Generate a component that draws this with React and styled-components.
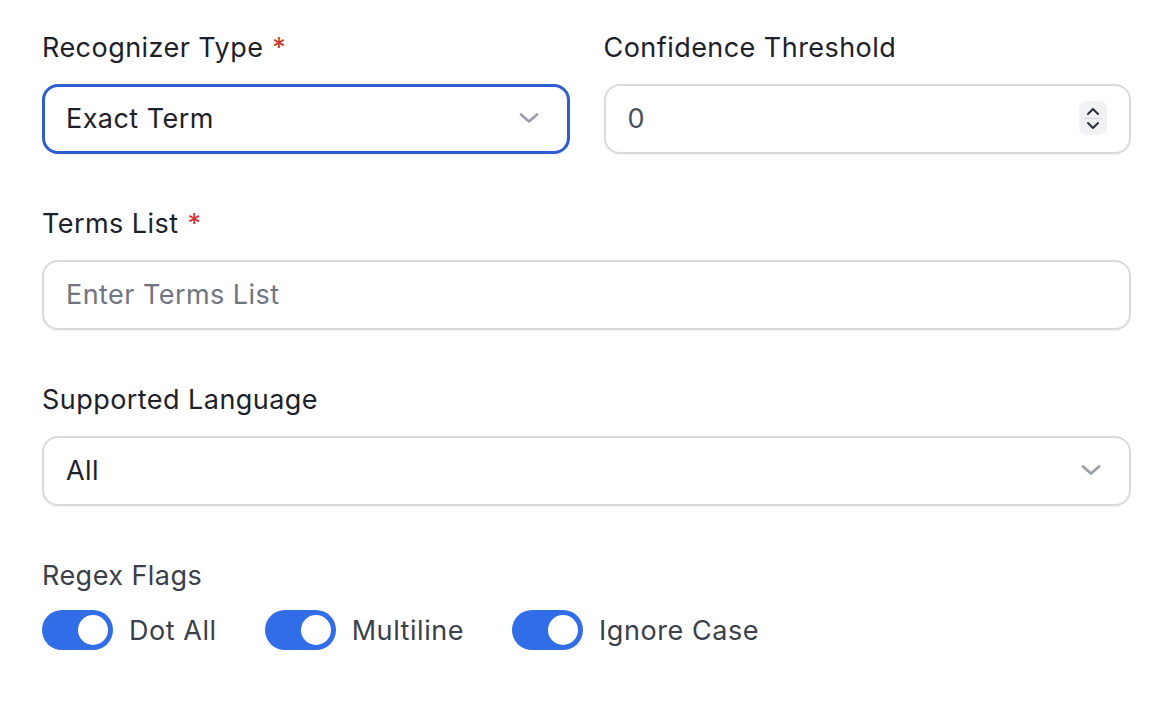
import React, { useState } from 'react'
import styled, { createGlobalStyle } from 'styled-components'

const GlobalStyle = createGlobalStyle`
  body {
    margin: 0;
    background: #ffffff;
    font-family: Inter, "Noto Sans", sans-serif;
    -webkit-font-smoothing: antialiased;
  }
`

const Form = styled.form`
  display: flex;
  flex-direction: column;
  gap: 52px;
  padding: 30px 39px 40px 42px;
`

const Row = styled.div`
  display: grid;
  grid-template-columns: 1fr 1fr;
  column-gap: 34px;
`

const Field = styled.div`
  display: flex;
  flex-direction: column;
`

const Label = styled.label`
  font-size: 27px;
  letter-spacing: 0.45px;
  line-height: 36px;
  color: ${p => (p.$muted ? '#3a3f4a' : '#1d2129')};
  margin-bottom: 18px;
`

const Required = styled.span`
  color: #d0342c;
  margin-left: 9px;
`

const Box = styled.div`
  box-sizing: border-box;
  height: 70px;
  display: flex;
  align-items: center;
  padding: 0 26px 2px 22px;
  border-radius: 16px;
  border: ${p => (p.$focused ? '3px solid #2f5cd0' : '2px solid #d9dade')};
  padding-left: ${p => (p.$focused ? '21px' : '22px')};
  box-shadow: 0 1px 2px rgba(16, 24, 40, 0.06);
  background: #fff;
`

const Value = styled.span`
  flex: 1;
  font-size: 27px;
  letter-spacing: 0.45px;
  color: ${p => (p.$placeholder ? '#6f7580' : p.$soft ? '#4a4f59' : '#1d2129')};
`

const Chevron = styled.svg`
  width: 24px;
  height: 24px;
  flex: none;
`

const Spinner = styled.div`
  width: 28px;
  height: 34px;
  border-radius: 8px;
  background: #f2f2f4;
  display: flex;
  flex-direction: column;
  align-items: center;
  justify-content: center;
  margin-right: -4px;

  svg {
    width: 16px;
    height: 12px;
  }
`

const SpinDivider = styled.div`
  width: 18px;
  height: 1px;
  background: #d6d7db;
  margin: 1px 0;
`

const ToggleRow = styled.div`
  display: flex;
  align-items: center;
  gap: 48px;
  margin-top: -2px;
`

const ToggleItem = styled.label`
  display: flex;
  align-items: center;
  gap: 16px;
  font-size: 27px;
  letter-spacing: 0.55px;
  color: #3a3f4a;
  cursor: pointer;
`

const Track = styled.span`
  position: relative;
  width: 71px;
  height: 40px;
  border-radius: 20px;
  background: ${p => (p.$on ? '#316de6' : '#d1d5db')};
  flex: none;
`

const Knob = styled.span`
  position: absolute;
  top: 5px;
  left: ${p => (p.$on ? '36px' : '5px')};
  width: 30px;
  height: 30px;
  border-radius: 50%;
  background: #fff;
  transition: left 0.15s ease;
`

const ChevronDown = () => (
  <Chevron viewBox="0 0 24 24" fill="none" stroke="#9a9ea6" strokeWidth="2.7" strokeLinecap="round" strokeLinejoin="round">
    <path d="M4 8.5l8 7 8-7" />
  </Chevron>
)

const Toggle = ({ label, on, onClick }) => (
  <ToggleItem onClick={onClick}>
    <Track $on={on}>
      <Knob $on={on} />
    </Track>
    {label}
  </ToggleItem>
)

export default function App() {
  const [flags, setFlags] = useState({ dotAll: true, multiline: true, ignoreCase: true })
  const flip = key => () => setFlags(f => ({ ...f, [key]: !f[key] }))

  return (
    <>
      <GlobalStyle />
      <Form onSubmit={e => e.preventDefault()}>
        <Row>
          <Field>
            <Label>Recognizer Type<Required>*</Required></Label>
            <Box $focused>
              <Value>Exact Term</Value>
              <ChevronDown />
            </Box>
          </Field>
          <Field>
            <Label>Confidence Threshold</Label>
            <Box>
              <Value $soft>0</Value>
              <Spinner>
                <svg viewBox="0 0 16 12" fill="none" stroke="#2a2e36" strokeWidth="2" strokeLinecap="round" strokeLinejoin="round">
                  <path d="M3 9l5-5 5 5" />
                </svg>
                <SpinDivider />
                <svg viewBox="0 0 16 12" fill="none" stroke="#2a2e36" strokeWidth="2" strokeLinecap="round" strokeLinejoin="round">
                  <path d="M3 3l5 5 5-5" />
                </svg>
              </Spinner>
            </Box>
          </Field>
        </Row>

        <Field>
          <Label>Terms List<Required>*</Required></Label>
          <Box>
            <Value $placeholder>Enter Terms List</Value>
          </Box>
        </Field>

        <Field>
          <Label>Supported Language</Label>
          <Box>
            <Value>All</Value>
            <ChevronDown />
          </Box>
        </Field>

        <Field>
          <Label $muted>Regex Flags</Label>
          <ToggleRow>
            <Toggle label="Dot All" on={flags.dotAll} onClick={flip('dotAll')} />
            <Toggle label="Multiline" on={flags.multiline} onClick={flip('multiline')} />
            <Toggle label="Ignore Case" on={flags.ignoreCase} onClick={flip('ignoreCase')} />
          </ToggleRow>
        </Field>
      </Form>
    </>
  )
}
